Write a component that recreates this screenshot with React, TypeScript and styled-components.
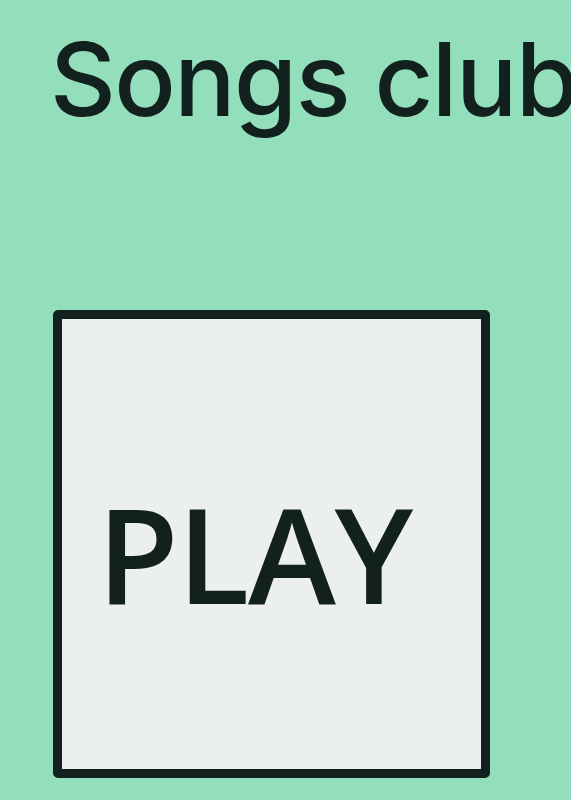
import React from "react";
import styled, { createGlobalStyle } from "styled-components";

const Global = createGlobalStyle`
  html, body { margin: 0; padding: 0; background: #93dfbb; }
  body { overflow: hidden; }
`;

const Page = styled.div`
  width: 571px;
  height: 800px;
  background: #93dfbb;
  padding: 0 0 0 53px;
  box-sizing: border-box;
  overflow: hidden;
  display: flex;
  flex-direction: column;
`;

const Title = styled.h1`
  margin: 19px 0 0 -3px;
  font-family: Inter, "DejaVu Sans", sans-serif;
  font-weight: 500;
  font-size: 102px;
  line-height: 120px;
  letter-spacing: -1.6px;
  color: #13211e;
  white-space: nowrap;
`;

const PlayBox = styled.button`
  margin-top: 171px;
  width: 437px;
  height: 468px;
  box-sizing: border-box;
  border: 9px solid #13211e;
  border-radius: 5px;
  background: #eceff0;
  display: flex;
  align-items: center;
  padding: 16px 0 0 35px;
  cursor: pointer;
`;

const PlayLabel = styled.span`
  font-family: "Open Sans", "Noto Sans", sans-serif;
  font-weight: 600;
  font-size: 133px;
  line-height: 1;
  letter-spacing: -1.5px;
  color: #13211e;
`;

export default function App() {
  return (
    <>
      <Global />
      <Page>
        <Title>Songs club</Title>
        <PlayBox>
          <PlayLabel>PLAY</PlayLabel>
        </PlayBox>
      </Page>
    </>
  );
}
